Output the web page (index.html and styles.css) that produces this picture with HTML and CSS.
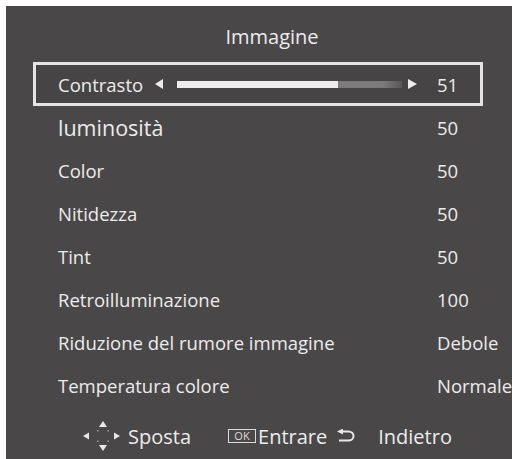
FILE: index.html
```html
<!DOCTYPE html>
<html>
<head>
<meta charset="utf-8">
<link rel="stylesheet" href="styles.css">
</head>
<body>
<div class="panel">
  <div class="title">Immagine</div>
  <div class="menu">
    <div class="row selected">
      <div class="label slider-label">
        <span>Contrasto</span>
        <span class="arrow-left"></span>
        <span class="bar"><span class="fill"></span><span class="rest"></span></span>
        <span class="arrow-right"></span>
      </div>
      <div class="value">51</div>
    </div>
    <div class="row big"><div class="label">luminosità</div><div class="value">50</div></div>
    <div class="row"><div class="label">Color</div><div class="value">50</div></div>
    <div class="row"><div class="label">Nitidezza</div><div class="value">50</div></div>
    <div class="row"><div class="label">Tint</div><div class="value">50</div></div>
    <div class="row"><div class="label">Retroilluminazione</div><div class="value">100</div></div>
    <div class="row"><div class="label">Riduzione del rumore immagine</div><div class="value">Debole</div></div>
    <div class="row"><div class="label">Temperatura colore</div><div class="value">Normale</div></div>
  </div>
  <div class="footer">
    <div class="hint">
      <svg class="dpad" width="38" height="30" viewBox="0 0 38 30">
        <polygon points="0,15 6,11.5 6,18.5" fill="#e8e8e8"/>
        <polygon points="37,15 31,11.5 31,18.5" fill="#e8e8e8"/>
        <polygon points="20,0 16,6 24,6" fill="#e8e8e8"/>
        <polygon points="20,30 16,24 24,24" fill="#e8e8e8"/>
        <rect x="14" y="9" width="1.5" height="1.5" fill="#9a9a9a"/>
        <rect x="24.5" y="9" width="1.5" height="1.5" fill="#9a9a9a"/>
        <rect x="14" y="19.5" width="1.5" height="1.5" fill="#9a9a9a"/>
        <rect x="24.5" y="19.5" width="1.5" height="1.5" fill="#9a9a9a"/>
      </svg>
      <span>Sposta</span>
    </div>
    <div class="hint">
      <span class="okbox">OK</span><span>Entrare</span>
    </div>
    <div class="hint">
      <svg class="back" width="19" height="14" viewBox="0 0 19 14">
        <path d="M5 2.5 H11.5 A5 4.5 0 0 1 11.5 11.5 H2" fill="none" stroke="#e8e8e8" stroke-width="2"/>
        <polygon points="0,2.5 6,-0.5 6,5.5" fill="#e8e8e8"/>
      </svg>
      <span>Indietro</span>
    </div>
  </div>
</div>
</body>
</html>
```

FILE: styles.css
```css
html, body {
  margin: 0;
  padding: 0;
  background: #ffffff;
}
body {
  width: 512px;
  height: 459px;
  overflow: hidden;
  font-family: "Open Sans", "Noto Sans", sans-serif;
  color: #ececec;
}
.panel {
  margin: 6px 0 0 6px;
  width: 506px;
  height: 453px;
  background: #4a4748;
  display: flex;
  flex-direction: column;
  overflow: hidden;
}
.title {
  height: 56px;
  box-sizing: border-box;
  padding: 18px 0 0 26px;
  text-align: center;
  font-size: 20px;
  line-height: 26px;
}
.menu {
  padding-left: 27px;
  display: flex;
  flex-direction: column;
}
.row {
  width: 450px;
  height: 43px;
  box-sizing: border-box;
  border: 3px solid transparent;
  padding-left: 22px;
  display: grid;
  grid-template-columns: 379px auto;
  align-items: center;
  font-size: 18.5px;
  white-space: nowrap;
}
.row.selected {
  border-color: #e4e4e4;
  height: 44px;
  background: #474445;
}
.row.big .label {
  font-size: 21.5px;
}
.slider-label {
  display: flex;
  align-items: center;
}
.arrow-left {
  width: 0;
  height: 0;
  border-top: 5px solid transparent;
  border-bottom: 5px solid transparent;
  border-right: 8px solid #ececec;
  margin-left: 12px;
}
.arrow-right {
  width: 0;
  height: 0;
  border-top: 5px solid transparent;
  border-bottom: 5px solid transparent;
  border-left: 9px solid #ececec;
  margin-left: 6px;
}
.bar {
  margin-left: 14px;
  width: 225px;
  height: 7px;
  display: flex;
}
.fill {
  display: block;
  width: 161px;
  height: 7px;
  background: #ececec;
}
.rest {
  display: block;
  flex: 1;
  height: 7px;
  background: linear-gradient(to right, #7d7a7b 70%, #5a5758);
}
.footer {
  margin-top: auto;
  height: 52px;
  display: flex;
  align-items: center;
  padding-left: 77px;
  padding-top: 6px;
  font-size: 20px;
  box-sizing: border-box;
}
.hint {
  display: flex;
  align-items: center;
}
.dpad {
  margin-right: 7px;
}
.hint + .hint {
  margin-left: 37px;
}
.okbox {
  box-sizing: border-box;
  font-size: 11px;
  line-height: 11px;
  border: 1.5px solid #dcdcdc;
  height: 14px;
  width: 28px;
  margin-right: 2px;
  text-align: center;
  color: #dcdcdc;
}
.back {
  margin-right: 22px;
}
.hint:nth-child(3) {
  margin-left: 10px;
}
```
